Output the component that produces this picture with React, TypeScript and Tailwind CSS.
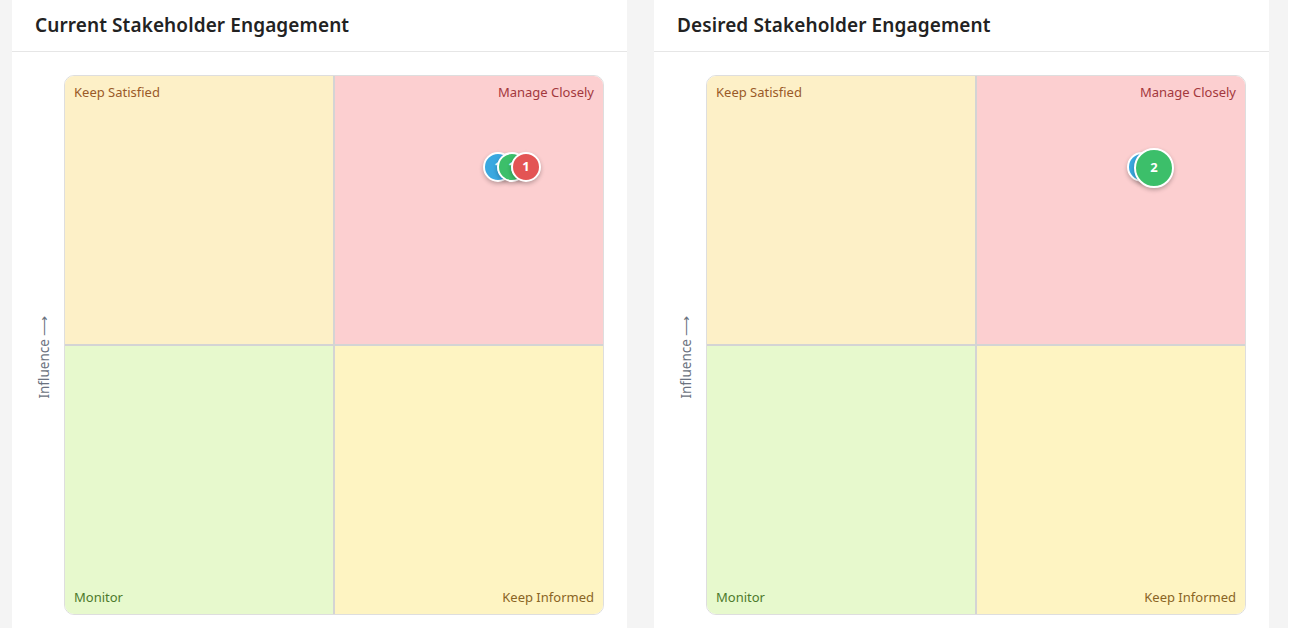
import React from 'react';

type Bubble = { x: number; y: number; size: number; color: string; label: string };

const font = { fontFamily: '"Noto Sans", "Open Sans", sans-serif' };

const Quadrant = ({
  label,
  bg,
  text,
  pos,
  className,
}: {
  label: string;
  bg: string;
  text: string;
  pos: 'tl' | 'tr' | 'bl' | 'br';
  className: string;
}) => {
  const align =
    pos === 'tl'
      ? 'items-start justify-start'
      : pos === 'tr'
      ? 'items-start justify-end'
      : pos === 'bl'
      ? 'items-end justify-start'
      : 'items-end justify-end';
  return (
    <div className={`flex ${align} px-[9px] py-[8px] ${bg} ${className}`}>
      <span className={`text-[13px] leading-[17px] ${text}`}>{label}</span>
    </div>
  );
};

const EngagementCard = ({ title, bubbles }: { title: string; bubbles: Bubble[] }) => (
  <div className="w-[615px] shrink-0 bg-white">
    <div className="h-[52px] flex items-center px-[23px] border-b border-[#e6e6e6]">
      <h2 className="text-[19px] font-semibold text-[#222] tracking-[0.1px]">{title}</h2>
    </div>
    <div className="pt-[23px] pl-[24px] pr-[23px] pb-6">
      <div className="flex gap-[12px]">
        <div className="w-[16px] h-[564px] flex items-center justify-center">
          <span className="-rotate-90 whitespace-nowrap text-[13.5px] text-[#6b7280]">Influence ⟶</span>
        </div>
        <div className="flex flex-col items-center">
          <div className="relative w-[540px] h-[540px] rounded-[10px] border border-[#dedede] overflow-hidden grid grid-cols-2 grid-rows-2">
            <Quadrant
              label="Keep Satisfied"
              pos="tl"
              bg="bg-[#fdf0c7]"
              text="text-[#9a5a28]"
              className="border-r border-b border-[#d4d4d4]"
            />
            <Quadrant
              label="Manage Closely"
              pos="tr"
              bg="bg-[#fccfd0]"
              text="text-[#a3383d]"
              className="border-l border-b border-[#d4d4d4]"
            />
            <Quadrant
              label="Monitor"
              pos="bl"
              bg="bg-[#e7f9cd]"
              text="text-[#4d7a2c]"
              className="border-r border-t border-[#d4d4d4]"
            />
            <Quadrant
              label="Keep Informed"
              pos="br"
              bg="bg-[#fef4c2]"
              text="text-[#8a6424]"
              className="border-l border-t border-[#d4d4d4]"
            />
            {bubbles.map((b, i) => (
              <div
                key={i}
                className="absolute flex items-center justify-center rounded-full border-2 border-white text-white font-bold text-[13px] shadow-[0_2px_4px_rgba(0,0,0,0.25)]"
                style={{
                  left: b.x - b.size / 2,
                  top: b.y - b.size / 2,
                  width: b.size,
                  height: b.size,
                  backgroundColor: b.color,
                }}
              >
                {b.label}
              </div>
            ))}
          </div>
          <div className="mt-[12px] text-[13px] text-[#6b7280]">Interest ⟶</div>
        </div>
      </div>
    </div>
  </div>
);

export default function App() {
  return (
    <div className="min-h-screen bg-[#f4f4f4] flex gap-[27px] pl-[12px] overflow-hidden" style={font}>
      <EngagementCard
        title="Current Stakeholder Engagement"
        bubbles={[
          { x: 433, y: 91, size: 30, color: '#3aa8e0', label: '1' },
          { x: 447, y: 91, size: 30, color: '#3cbf6a', label: '1' },
          { x: 461, y: 91, size: 30, color: '#e35454', label: '1' },
        ]}
      />
      <EngagementCard
        title="Desired Stakeholder Engagement"
        bubbles={[
          { x: 435, y: 91, size: 30, color: '#3aa8e0', label: '1' },
          { x: 447, y: 92, size: 40, color: '#3cbf6a', label: '2' },
        ]}
      />
      <div className="w-[200px] shrink-0 -ml-[8px] bg-white" />
    </div>
  );
}
